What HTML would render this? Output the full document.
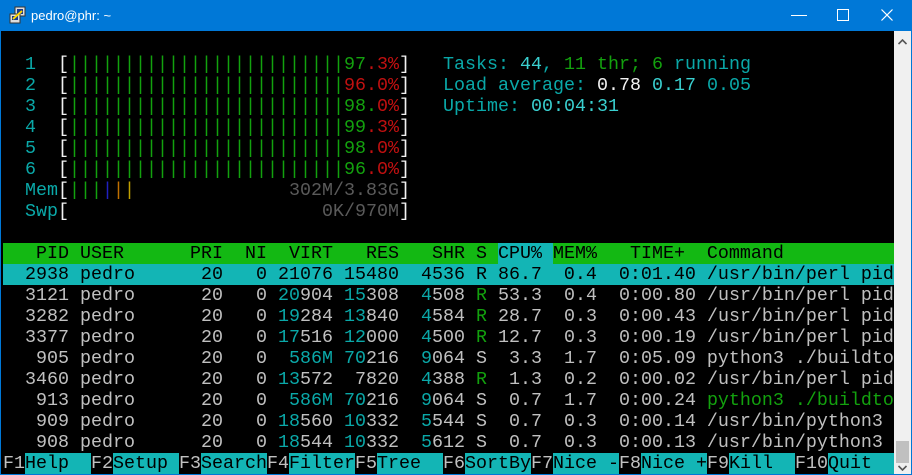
<!DOCTYPE html>
<html><head><meta charset="utf-8"><style>
body{margin:0;width:912px;height:475px;overflow:hidden;background:#0078d7;font-family:"Liberation Mono",monospace;}
#title{position:absolute;left:0;top:0;width:912px;height:31px;background:#0078d7;}
#title .t{position:absolute;left:31px;top:8px;font:13px "Liberation Sans",sans-serif;color:#fff;}
#term{position:absolute;left:1px;top:31px;width:893px;height:443px;background:#000;overflow:hidden;}
#sb{position:absolute;left:894px;top:31px;width:17px;height:443px;background:#f0f0f0;}
.row{position:absolute;left:2px;height:21px;line-height:21px;font-size:18.33px;white-space:pre;color:#c0c0c0;width:891px;overflow:hidden;}
.g{color:#c0c0c0}.c{color:#0aa8a8}.gr{color:#13a10e}.r{color:#c01010}.w{color:#f2f2f2}.d{color:#5a5a5a}.cb{color:#3ad0d0}
.hd{background:#13b813;color:#000}.sel{background:#13b5b5;color:#000}
.fk{color:#c0c0c0;background:#000}.fl{background:#13b5b5;color:#000}
</style></head><body>
<div id="title">
<svg style="position:absolute;left:9px;top:6px" width="18" height="18" viewBox="0 0 18 18"><rect x="6" y="1" width="10" height="9" fill="#ddd" stroke="#333"/><rect x="8" y="3" width="6" height="5" fill="#1a3a8a"/><rect x="1" y="8" width="10" height="9" fill="#ddd" stroke="#333"/><rect x="3" y="10" width="6" height="4" fill="#1a3a8a"/><path d="M4 13 L13 5" stroke="#ffd700" stroke-width="2"/></svg>
<div class="t">pedro@phr: ~</div>
<div style="position:absolute;left:791px;top:15px;width:16px;height:1px;background:#fff"></div>
<div style="position:absolute;left:837px;top:9px;width:10px;height:10px;border:1px solid #fff"></div>
<svg style="position:absolute;left:881px;top:9px" width="12" height="12"><path d="M0.5 0.5L11.5 11.5M11.5 0.5L0.5 11.5" stroke="#fff" stroke-width="1.2"/></svg>
</div>
<div id="term">
<div style="position:absolute;left:0;top:1px;width:893px;height:442px">
<div class="row" style="top:22px">  <span class="c">1</span>  <span class="w">[</span><span class="gr">|||||||||||||||||||||||||97</span><span class="r">.3%</span><span class="w">]</span></div>
<div class="row" style="top:43px">  <span class="c">2</span>  <span class="w">[</span><span class="gr">|||||||||||||||||||||||||</span><span class="r">96.0%</span><span class="w">]</span></div>
<div class="row" style="top:64px">  <span class="c">3</span>  <span class="w">[</span><span class="gr">|||||||||||||||||||||||||98.</span><span class="r">0%</span><span class="w">]</span></div>
<div class="row" style="top:85px">  <span class="c">4</span>  <span class="w">[</span><span class="gr">|||||||||||||||||||||||||99</span><span class="r">.3%</span><span class="w">]</span></div>
<div class="row" style="top:106px">  <span class="c">5</span>  <span class="w">[</span><span class="gr">|||||||||||||||||||||||||98</span><span class="r">.0%</span><span class="w">]</span></div>
<div class="row" style="top:127px">  <span class="c">6</span>  <span class="w">[</span><span class="gr">|||||||||||||||||||||||||96</span><span class="r">.0%</span><span class="w">]</span></div>
<div class="row" style="top:148px">  <span class="c">Mem</span><span class="w">[</span><span class="gr">|||</span><span style="color:#2020c0">|</span><span style="color:#c07000">|</span><span style="color:#c0a000">|</span>              <span class="d">302M/3.83G</span><span class="w">]</span></div>
<div class="row" style="top:169px">  <span class="c">Swp</span><span class="w">[</span>                       <span class="d">0K/970M</span><span class="w">]</span></div>
<div class="row" style="top:22px;left:442px;width:450px"><span class="c">Tasks: </span><span class="cb">44</span><span class="c">, </span><span class="gr">11 thr; 6</span><span class="c"> running</span></div>
<div class="row" style="top:43px;left:442px;width:450px"><span class="c">Load average: </span><span class="w">0.78 </span><span class="cb">0.17 </span><span class="c">0.05</span></div>
<div class="row" style="top:64px;left:442px;width:450px"><span class="c">Uptime: </span><span class="cb">00:04:31</span></div>
<div class="row hd" style="top:211px">   PID USER      PRI  NI  VIRT   RES   SHR S <span class="sel">CPU% </span>MEM%   TIME+  Command                 </div>
<div class="row sel" style="top:232px">  2938 pedro      20   0 21076 15480  4536 R 86.7  0.4  0:01.40 /usr/bin/perl pid</div>
<div class="row" style="top:253px">  3121 pedro      20   0 <span class="c">20</span>904 <span class="c">15</span>308  <span class="c">4</span>508 <span class="gr">R</span> 53.3  0.4  0:00.80 /usr/bin/perl pid</div>
<div class="row" style="top:274px">  3282 pedro      20   0 <span class="c">19</span>284 <span class="c">13</span>840  <span class="c">4</span>584 <span class="gr">R</span> 28.7  0.3  0:00.43 /usr/bin/perl pid</div>
<div class="row" style="top:295px">  3377 pedro      20   0 <span class="c">17</span>516 <span class="c">12</span>000  <span class="c">4</span>500 <span class="gr">R</span> 12.7  0.3  0:00.19 /usr/bin/perl pid</div>
<div class="row" style="top:316px">   905 pedro      20   0  <span class="c">586M</span> <span class="c">70</span>216  <span class="c">9</span>064 S  3.3  1.7  0:05.09 python3 ./buildtool</div>
<div class="row" style="top:337px">  3460 pedro      20   0 <span class="c">13</span>572  7820  <span class="c">4</span>388 <span class="gr">R</span>  1.3  0.2  0:00.02 /usr/bin/perl pid</div>
<div class="row" style="top:358px">   913 pedro      20   0  <span class="c">586M</span> <span class="c">70</span>216  <span class="c">9</span>064 S  0.7  1.7  0:00.24 <span class="gr">python3 ./buildtool</span></div>
<div class="row" style="top:379px">   909 pedro      20   0 <span class="c">18</span>560 <span class="c">10</span>332  <span class="c">5</span>544 S  0.7  0.3  0:00.14 /usr/bin/python3</div>
<div class="row" style="top:400px">   908 pedro      20   0 <span class="c">18</span>544 <span class="c">10</span>332  <span class="c">5</span>612 S  0.7  0.3  0:00.13 /usr/bin/python3</div>
<div class="row" style="top:421px"><span class="fk">F1</span><span class="fl">Help  </span><span class="fk">F2</span><span class="fl">Setup </span><span class="fk">F3</span><span class="fl">Search</span><span class="fk">F4</span><span class="fl">Filter</span><span class="fk">F5</span><span class="fl">Tree  </span><span class="fk">F6</span><span class="fl">SortBy</span><span class="fk">F7</span><span class="fl">Nice -</span><span class="fk">F8</span><span class="fl">Nice +</span><span class="fk">F9</span><span class="fl">Kill  </span><span class="fk">F10</span><span class="fl">Quit          </span></div>
</div>
</div>
<div id="sb">
<svg style="position:absolute;left:4px;top:8px" width="9" height="6"><path d="M0.5 5L4.5 1L8.5 5" stroke="#555" stroke-width="1.6" fill="none"/></svg>
<div style="position:absolute;left:2px;top:410px;width:13px;height:22px;background:#c0c0c0"></div>
<svg style="position:absolute;left:4px;top:434px" width="9" height="6"><path d="M0.5 1L4.5 5L8.5 1" stroke="#555" stroke-width="1.6" fill="none"/></svg>
</div>
</body></html>
